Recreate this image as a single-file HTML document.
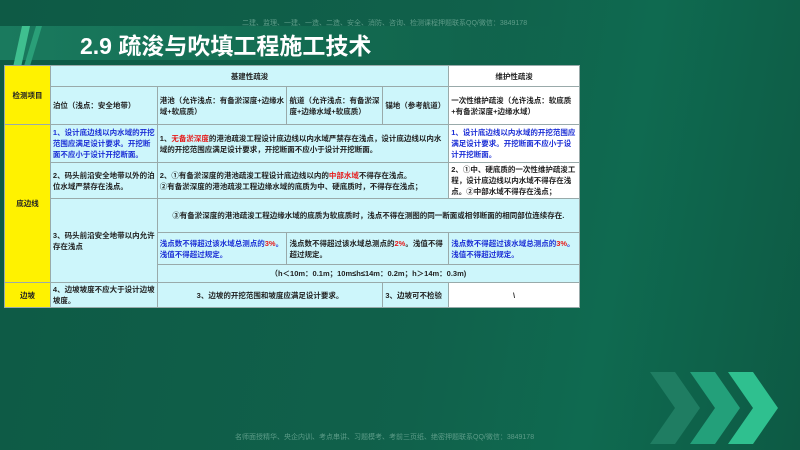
<!DOCTYPE html>
<html><head><meta charset="utf-8"><style>
*{margin:0;padding:0;box-sizing:border-box}
body{width:800px;height:450px;overflow:hidden;background:#0f5e48;font-family:"Liberation Sans","Noto Sans CJK SC",sans-serif;position:relative}
.bg{position:absolute;inset:0;background:linear-gradient(100deg,#0e5a45 0%,#10614b 55%,#0f6a50 75%,#0d5a44 100%)}
.band{position:absolute;left:0;top:26px;width:560px;height:34px;background:linear-gradient(90deg,#1a7a5e,#126a50 60%,rgba(16,97,75,0))}
.title{position:absolute;left:80px;top:27px;color:#fff;font-size:23px;font-weight:bold}
.wm{position:absolute;color:#5d9c88;font-size:7px;white-space:nowrap}
table{position:absolute;left:4px;top:65px;width:576px;border-collapse:collapse;font-size:7.5px;line-height:11px;font-weight:bold;color:#222}
td{border:1px solid #9aa;background:#cdf6fb;padding:1px 2px;vertical-align:middle}
.y{background:#fff200;text-align:center}
.w{background:#fff}
.b{color:#1c2fd6}
.r{color:#e61b1b}
.c{text-align:center}
.chev{position:absolute;top:372px}
</style></head><body>
<div class="bg"></div>
<div class="band"></div>
<svg style="position:absolute;left:8px;top:26px" width="36" height="64"><polygon points="14,0 22,0 10,55 2,55" fill="#3fbf8f"/><polygon points="28,0 34,0 22,40 16,40" fill="#2a9f78"/></svg>
<div class="title">2.9 疏浚与吹填工程施工技术</div>
<div class="wm" style="left:242px;top:18px">二建、监理、一建、一造、二造、安全、消防、咨询、检测课程押题联系QQ/微信：3849178</div>
<div class="wm" style="left:235px;top:432px">名师面授精华、央企内训、考点串讲、习题模考、考前三页纸、绝密押题联系QQ/微信：3849178</div>
<svg class="chev" style="left:650px" width="140" height="72"><polygon points="0,0 25,0 50,36 25,72 0,72 25,36" fill="#1f7d62"/><polygon points="40,0 65,0 90,36 65,72 40,72 65,36" fill="#23a07a"/><polygon points="78,0 103,0 128,36 103,72 78,72 103,36" fill="#2fc08f"/></svg>
<table>
<colgroup><col style="width:46px"><col style="width:107px"><col style="width:130px"><col style="width:96px"><col style="width:66px"><col style="width:131px"></colgroup>
<tr style="height:21px"><td class="y" rowspan="2">检测项目</td><td class="c" colspan="4">基建性疏浚</td><td class="c w">维护性疏浚</td></tr>
<tr style="height:38px"><td>泊位（浅点：安全地带）</td><td>港池（允许浅点：有备淤深度+边缘水域+软底质）</td><td>航道（允许浅点：有备淤深度+边缘水域+软底质）</td><td>锚地（参考航道）</td><td class="w">一次性维护疏浚（允许浅点：软底质+有备淤深度+边缘水域）</td></tr>
<tr style="height:38px"><td class="y" rowspan="5">底边线</td><td class="b">1、设计底边线以内水域的开挖范围应满足设计要求。开挖断面不应小于设计开挖断面。</td><td colspan="3">1、<span class="r">无备淤深度</span>的港池疏浚工程设计底边线以内水域严禁存在浅点，设计底边线以内水域的开挖范围应满足设计要求，开挖断面不应小于设计开挖断面。</td><td class="w b">1、设计底边线以内水域的开挖范围应满足设计要求。开挖断面不应小于设计开挖断面。</td></tr>
<tr style="height:36px"><td>2、码头前沿安全地带以外的泊位水域严禁存在浅点。</td><td colspan="3">2、①有备淤深度的港池疏浚工程设计底边线以内的<span class="r">中部水域</span>不得存在浅点。<br>②有备淤深度的港池疏浚工程边缘水域的底质为中、硬底质时，不得存在浅点；</td><td class="w">2、①中、硬底质的一次性维护疏浚工程，设计底边线以内水域不得存在浅点。②中部水域不得存在浅点；</td></tr>
<tr style="height:34px"><td rowspan="3">3、码头前沿安全地带以内允许存在浅点</td><td class="c" colspan="4">③有备淤深度的港池疏浚工程边缘水域的底质为软底质时，浅点不得在测图的同一断面或相邻断面的相同部位连续存在.</td></tr>
<tr style="height:32px"><td class="b">浅点数不得超过该水域总测点的<span class="r">3%</span>。浅值不得超过规定。</td><td colspan="2">浅点数不得超过该水域总测点的<span class="r">2%</span>。浅值不得超过规定。</td><td class="b">浅点数不得超过该水域总测点的<span class="r">3%</span>。浅值不得超过规定。</td></tr>
<tr style="height:18px"><td class="c" colspan="4">（h＜10m：0.1m；10m≤h≤14m：0.2m；h＞14m：0.3m)</td></tr>
<tr style="height:25px"><td class="y">边坡</td><td>4、边坡坡度不应大于设计边坡坡度。</td><td class="c" colspan="2">3、边坡的开挖范围和坡度应满足设计要求。</td><td>3、边坡可不检验</td><td class="c w">\</td></tr>
</table>
</body></html>
